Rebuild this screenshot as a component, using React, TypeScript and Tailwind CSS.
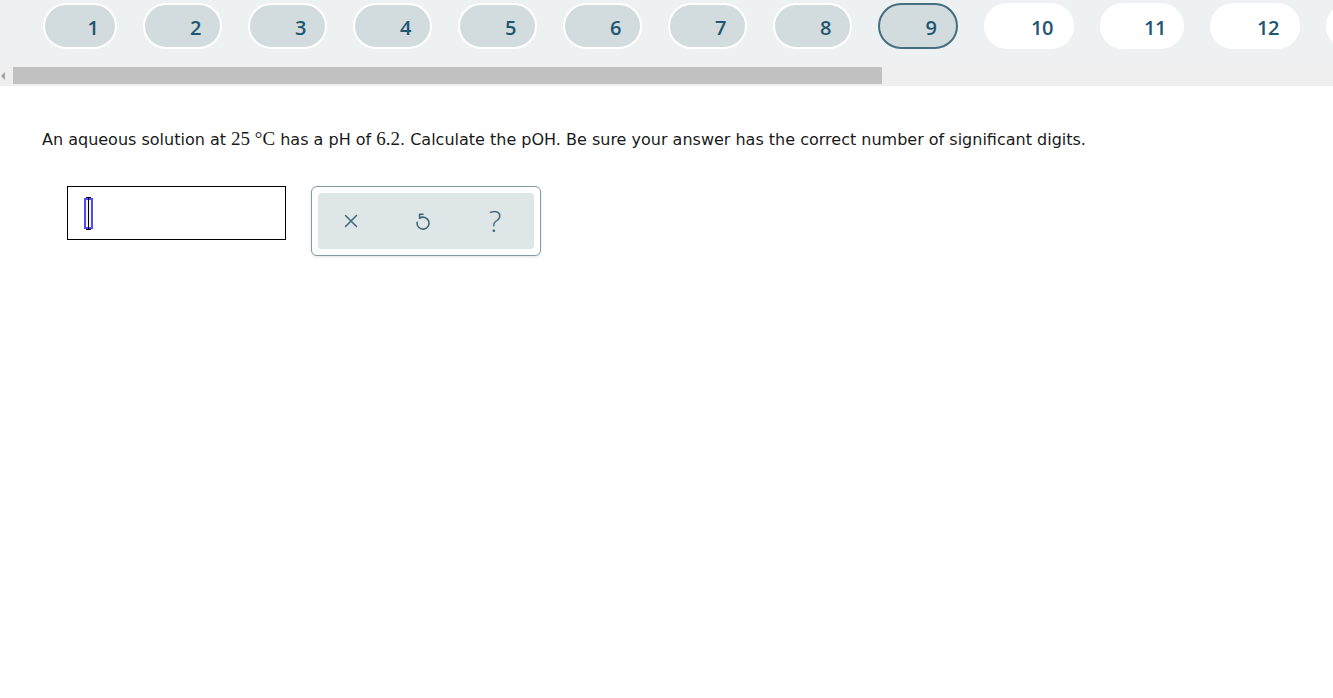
import { X } from 'lucide-react'

type Pill = { n: number; w: number; state: 'done' | 'current' | 'todo' }

const pills: Pill[] = [
  { n: 1, w: 74, state: 'done' },
  { n: 2, w: 79, state: 'done' },
  { n: 3, w: 79, state: 'done' },
  { n: 4, w: 79, state: 'done' },
  { n: 5, w: 79, state: 'done' },
  { n: 6, w: 79, state: 'done' },
  { n: 7, w: 79, state: 'done' },
  { n: 8, w: 79, state: 'done' },
  { n: 9, w: 80, state: 'current' },
  { n: 10, w: 90, state: 'todo' },
  { n: 11, w: 84, state: 'todo' },
  { n: 12, w: 90, state: 'todo' },
  { n: 13, w: 90, state: 'todo' },
]

const pillStyle: Record<Pill['state'], string> = {
  done: 'bg-[#d2dbde] border-2 border-white',
  current: 'bg-[#d2dbde] border-2 border-[#456f80]',
  todo: 'bg-white border-2 border-white',
}

// verdana-ish body copy, times-ish for the inline math bits
const bodyText = 'text-[16px] leading-[24px] text-[#1a1a1a] font-[family-name:DejaVu_Sans] whitespace-nowrap'
const mathText = 'font-[family-name:Liberation_Serif] text-[19px]'

function QuestionNav() {
  return (
    <div className="bg-[#eef1f2] h-[65px] flex items-start pt-[3px] pl-[43px] gap-[26px] overflow-hidden whitespace-nowrap font-[family-name:Open_Sans]">
      {pills.map(p => (
        <div key={p.n}
          className={`h-[46px] shrink-0 rounded-full flex items-center justify-center pl-[26px] pt-[3px] text-[20px] font-semibold text-[#1f5670] tracking-[-0.5px] ${pillStyle[p.state]}`}
          style={{ width: p.w }}>
          {p.n}
        </div>
      ))}
    </div>
  )
}

function Scrollbar() {
  return (
    <div className="h-[21px] bg-[#efefef] flex items-center">
      <div className="w-[13px] h-[17px] flex items-center justify-start pl-[1px]">
        <div className="w-0 h-0 border-y-[4px] border-y-transparent border-r-[4px] border-r-[#a3a3a3]" />
      </div>
      <div className="w-[869px] h-[17px] bg-[#c1c1c1]" />
    </div>
  )
}

function Caret() {
  return (
    <div className="relative w-[9px] h-[33px] flex items-center justify-center">
      <div className="w-[9px] h-[31px] border-2 border-[#4d4df2] bg-[#f2f2f2]" />
      <div className="absolute left-[4px] top-0 w-px h-[33px] bg-black" />
      <div className="absolute left-[2px] top-0 w-[5px] h-px bg-black" />
      <div className="absolute left-[2px] bottom-0 w-[5px] h-px bg-black" />
    </div>
  )
}

function UndoIcon() {
  return (
    <svg width="24" height="24" viewBox="0 0 24 24" fill="none" stroke="currentColor" strokeWidth="1.6" strokeLinecap="round" strokeLinejoin="round">
      <path d="M8.6 9.2 A6 6 0 1 1 6.1 13.2" />
      <path d="M12 5.2 H8.6 V8.8" />
    </svg>
  )
}

function Toolbar() {
  return (
    <div className="ml-[25px] w-[230px] h-[70px] rounded-[6px] border border-[#7f9ca6] bg-white p-[6px] shadow-[0_1px_3px_rgba(0,0,0,0.12)]">
      <div className="h-full rounded-[4px] bg-[#dfe6e8] flex items-center pl-[17px] gap-[40px] text-[#3d6778]">
        <div className="w-[32px] flex justify-center"><X size={22} strokeWidth={1.6} /></div>
        <div className="w-[32px] flex justify-center"><UndoIcon /></div>
        <div className="w-[32px] flex justify-center text-[30px] leading-none font-[family-name:Open_Sans] font-light">?</div>
      </div>
    </div>
  )
}

export default function App() {
  return (
    <div className="w-[1333px] h-[698px] bg-white overflow-hidden">
      <QuestionNav />
      <Scrollbar />
      <div className="pl-[42px] pt-[41px]">
        <p className={bodyText}>
          An aqueous solution at <span className={mathText}>25 {'\u00b0'}C</span> has a pH of <span className={mathText}>6.2</span>. Calculate the pOH. Be sure your answer has the correct number of significant digits.
        </p>
        <div className="flex items-start mt-[34px] ml-[25px]">
          <div className="w-[219px] h-[54px] border border-black flex items-center pl-[16px]">
            <Caret />
          </div>
          <Toolbar />
        </div>
      </div>
    </div>
  )
}
